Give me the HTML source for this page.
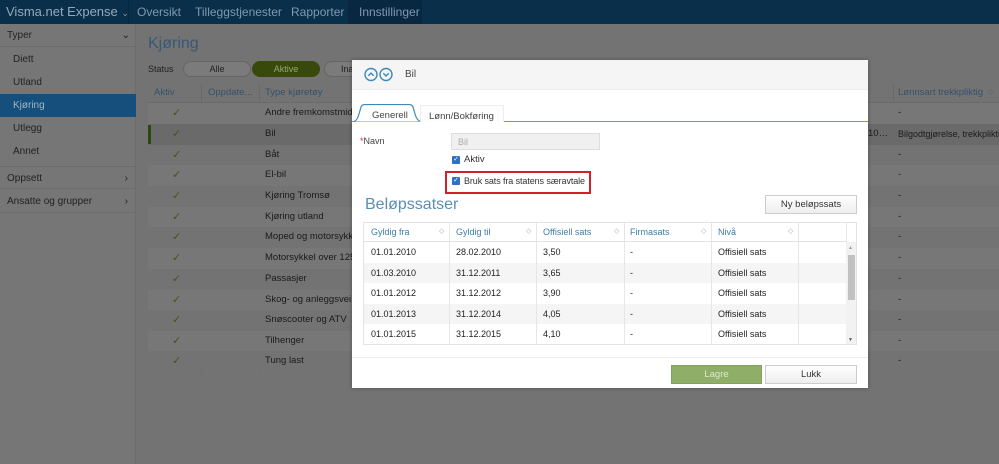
<!DOCTYPE html>
<html><head><meta charset="utf-8"><style>
*{box-sizing:border-box;margin:0;padding:0}
body{width:999px;height:464px;overflow:hidden;background:#737373;font-family:"Liberation Sans",sans-serif;position:relative;font-size:11px;color:#222;white-space:nowrap}
.a{position:absolute}
.nav{left:0;top:0;width:999px;height:24px;background:#0a2f4b}
.nav span{position:absolute;top:5px;color:#7f9ab0;font-size:12px}
.side{left:0;top:24px;width:136px;height:440px;background:#767676;border-right:1px solid #6c6c6c}
.si{position:absolute;left:0;width:136px;height:23px;font-size:10px;color:#222;line-height:23px}
.row{position:absolute;left:148px;width:851px;height:21px;font-size:9.5px;color:#1a1a1a;line-height:20px;overflow:hidden}
.chk{position:absolute;left:172px;color:#45521f;font-size:11px}
.mrow{position:absolute;left:0;width:482px;height:20.5px;line-height:20px;font-size:9px;color:#222}
.mrow span,.mh span{position:absolute}
.mh{position:absolute;left:0;top:0;width:482px;height:19px;line-height:18px;font-size:9px;color:#3d7fa6;background:#fff;border-bottom:1px solid #e3e3e3}
.vl{position:absolute;top:0;width:1px;height:123px;background:#e6e6e6}
.srt{color:#aaa;font-size:7px}
</style></head><body>
<div class="a nav">
<span style="left:6px;color:#93a9ba;font-size:13px;top:4px">Visma.net Expense <span style="position:static;font-size:9px">⌄</span></span>
<div class="a" style="left:128px;top:0;width:1px;height:24px;background:#082840"></div>
<span style="left:137px">Oversikt</span>
<span style="left:195px">Tilleggstjenester</span>
<span style="left:291px">Rapporter</span>
<div class="a" style="left:348px;top:0;width:74px;height:24px;background:#082842"></div>
<span style="left:359px">Innstillinger</span>
</div>
<div class="a side">
<div class="si" style="top:0;left:0;padding-left:7px;border-bottom:1px solid #6c6c6c">Typer<span style="position:absolute;right:6px">⌄</span></div>
<div class="si" style="top:24px;padding-left:13px">Diett</div>
<div class="si" style="top:47px;padding-left:13px">Utland</div>
<div class="si" style="top:70px;padding-left:13px;background:#164f7c;color:#a0b6c6">Kjøring</div>
<div class="si" style="top:93px;padding-left:13px">Utlegg</div>
<div class="si" style="top:116px;padding-left:13px">Annet</div>
<div class="si" style="top:142px;padding-left:7px;border-top:1px solid #6c6c6c;border-bottom:1px solid #6c6c6c">Oppsett<span style="position:absolute;right:8px">›</span></div>
<div class="si" style="top:166px;padding-left:7px;border-bottom:1px solid #6c6c6c">Ansatte og grupper<span style="position:absolute;right:8px">›</span></div>
</div>
<div class="a" style="left:148px;top:35px;font-size:16px;color:#375876">Kjøring</div>
<div class="a" style="left:148px;top:64px;font-size:9px;color:#222">Status</div>
<div class="a" style="left:183px;top:61px;width:68px;height:16px;border-radius:8px;background:#7b7b7b;border:1px solid #666;text-align:center;font-size:9px;line-height:14px;color:#222">Alle</div>
<div class="a" style="left:252px;top:61px;width:68px;height:16px;border-radius:8px;background:#384a0b;text-align:center;font-size:9px;line-height:16px;color:#97a575">Aktive</div>
<div class="a" style="left:324px;top:61px;width:40px;height:16px;border-radius:8px 0 0 8px;background:#7b7b7b;border:1px solid #666;font-size:9px;line-height:14px;padding-left:16px;color:#222">Ina</div>
<div class="a" style="left:148px;top:84px;width:851px;height:19px;background:#737373;border-bottom:1px solid #6a6a6a;font-size:9.5px;color:#34526b;line-height:18px">
<span class="a" style="left:6px">Aktiv</span><span class="a" style="left:60px">Oppdate...</span><span class="a" style="left:117px">Type kjøretøy</span><span class="a" style="left:750px">Lønnsart trekkpliktig</span><span class="a" style="left:840px;color:#5e5e5e;font-size:7px">◇</span>
</div>
<div class="a" style="left:201px;top:84px;width:1px;height:290px;background:#6a6a6a"></div>
<div class="a" style="left:259px;top:84px;width:1px;height:290px;background:#6a6a6a"></div>
<div class="a" style="left:893px;top:84px;width:1px;height:290px;background:#6a6a6a"></div>
<div class="row" style="top:103px;background:#777"><span class="a" style="left:117px">Andre fremkomstmidler</span><span class="a" style="left:750px">-</span></div>
<div class="row" style="top:124px;background:#6a6a6a"><div class="a" style="left:0;top:1px;width:3px;height:19px;background:#2c460c"></div><span class="a" style="left:117px">Bil</span><span class="a" style="left:720px">10…</span><span class="a" style="left:750px;font-size:9px">Bilgodtgjørelse, trekkpliktig</span></div>
<div class="row" style="top:145px;background:#737373"><span class="a" style="left:117px">Båt</span><span class="a" style="left:750px">-</span></div>
<div class="row" style="top:165px;background:#777"><span class="a" style="left:117px">El-bil</span><span class="a" style="left:750px">-</span></div>
<div class="row" style="top:186px;background:#737373"><span class="a" style="left:117px">Kjøring Tromsø</span><span class="a" style="left:750px">-</span></div>
<div class="row" style="top:207px;background:#777"><span class="a" style="left:117px">Kjøring utland</span><span class="a" style="left:750px">-</span></div>
<div class="row" style="top:227px;background:#737373"><span class="a" style="left:117px">Moped og motorsykkel o</span><span class="a" style="left:750px">-</span></div>
<div class="row" style="top:248px;background:#777"><span class="a" style="left:117px">Motorsykkel over 125 cc</span><span class="a" style="left:750px">-</span></div>
<div class="row" style="top:269px;background:#737373"><span class="a" style="left:117px">Passasjer</span><span class="a" style="left:750px">-</span></div>
<div class="row" style="top:290px;background:#777"><span class="a" style="left:117px">Skog- og anleggsvei</span><span class="a" style="left:750px">-</span></div>
<div class="row" style="top:310px;background:#737373"><span class="a" style="left:117px">Snøscooter og ATV</span><span class="a" style="left:750px">-</span></div>
<div class="row" style="top:331px;background:#777"><span class="a" style="left:117px">Tilhenger</span><span class="a" style="left:750px">-</span></div>
<div class="row" style="top:351px;background:#737373"><span class="a" style="left:117px">Tung last</span><span class="a" style="left:750px">-</span></div>
<div class="chk a" style="top:106px">✓</div><div class="chk a" style="top:127px">✓</div><div class="chk a" style="top:148px">✓</div><div class="chk a" style="top:168px">✓</div><div class="chk a" style="top:189px">✓</div><div class="chk a" style="top:210px">✓</div><div class="chk a" style="top:230px">✓</div><div class="chk a" style="top:251px">✓</div><div class="chk a" style="top:272px">✓</div><div class="chk a" style="top:293px">✓</div><div class="chk a" style="top:313px">✓</div><div class="chk a" style="top:334px">✓</div><div class="chk a" style="top:354px">✓</div>

<!-- modal -->
<div class="a" style="left:352px;top:60px;width:516px;height:328px;background:#fff;box-shadow:0 0 4px rgba(0,0,0,.3)">
<div class="a" style="left:0;top:0;width:516px;height:30px;background:#f5f5f5;border-bottom:1px solid #ececec"></div>
<svg class="a" style="left:12px;top:7px" width="32" height="15" viewBox="0 0 32 15"><circle cx="7" cy="7.5" r="6" fill="none" stroke="#3d8ab8" stroke-width="1.4"/><path d="M4.3 8.8 7 6.1 9.7 8.8" fill="none" stroke="#3d8ab8" stroke-width="1.4"/><circle cx="22" cy="7.5" r="6" fill="none" stroke="#3d8ab8" stroke-width="1.4"/><path d="M19.3 6.3 22 9 24.7 6.3" fill="none" stroke="#3d8ab8" stroke-width="1.4"/></svg>
<div class="a" style="left:53px;top:9px;font-size:10px;color:#444">Bil</div>
<div class="a" style="left:0;top:61px;width:516px;height:1px;background:#7ea23f"></div>
<svg class="a" style="left:2px;top:44px" width="68" height="18"><path d="M0 17.5 Q3 17 5 10 L7 3 Q8 0.5 11 0.5 L55 0.5 Q58 0.5 59 3 L61 10 Q63 17 67 17.5" fill="#fff" stroke="#3d8ab8" stroke-width="1.2"/></svg>
<div class="a" style="left:20px;top:50px;font-size:9.5px;color:#444">Generell</div>
<div class="a" style="left:68px;top:45px;width:84px;height:17px;background:#fdfdfd;border:1px solid #eee;border-bottom:none;font-size:9.5px;color:#444;padding:5px 0 0 8px">Lønn/Bokføring</div>
<div class="a" style="left:8px;top:76px;font-size:9px;color:#444"><span style="color:#c33">*</span>Navn</div>
<div class="a" style="left:99px;top:73px;width:149px;height:17px;background:#f0f0f0;border:1px solid #ddd;font-size:9px;color:#aaa;padding:3px 0 0 6px">Bil</div>
<div class="a" style="left:100px;top:96px;width:8px;height:8px;background:#2d73c2;border-radius:1px;color:#fff;font-size:7px;line-height:8px;text-align:center">✓</div>
<div class="a" style="left:112px;top:94px;font-size:9.5px;color:#333">Aktiv</div>
<div class="a" style="left:93px;top:111px;width:146px;height:23px;border:2.5px solid #d0202a"></div>
<div class="a" style="left:100px;top:117px;width:8px;height:8px;background:#2d73c2;border-radius:1px;color:#fff;font-size:7px;line-height:8px;text-align:center">✓</div>
<div class="a" style="left:112px;top:116px;font-size:9px;color:#333;letter-spacing:-0.1px">Bruk sats fra statens særavtale</div>
<div class="a" style="left:13px;top:136px;font-size:16px;color:#5b8fb2">Beløpssatser</div>
<div class="a" style="left:413px;top:135px;width:92px;height:19px;border:1px solid #ccc;background:linear-gradient(#fff,#eee);font-size:9.5px;color:#333;text-align:center;line-height:17px">Ny beløpssats</div>
<div class="a" style="left:11px;top:162px;width:494px;height:123px;border:1px solid #e3e3e3;background:#fff;overflow:hidden">
<div class="mh"><span style="left:7px">Gyldig fra</span><span class="srt" style="left:75px">◇</span><span style="left:92px">Gyldig til</span><span class="srt" style="left:162px">◇</span><span style="left:179px">Offisiell sats</span><span class="srt" style="left:250px">◇</span><span style="left:266px">Firmasats</span><span class="srt" style="left:337px">◇</span><span style="left:354px">Nivå</span><span class="srt" style="left:424px">◇</span></div>
<div class="mrow" style="top:19px"><span style="left:7px">01.01.2010</span><span style="left:92px">28.02.2010</span><span style="left:179px">3,50</span><span style="left:266px">-</span><span style="left:354px">Offisiell sats</span></div>
<div class="mrow" style="top:39.5px;background:#f5f5f5"><span style="left:7px">01.03.2010</span><span style="left:92px">31.12.2011</span><span style="left:179px">3,65</span><span style="left:266px">-</span><span style="left:354px">Offisiell sats</span></div>
<div class="mrow" style="top:60px"><span style="left:7px">01.01.2012</span><span style="left:92px">31.12.2012</span><span style="left:179px">3,90</span><span style="left:266px">-</span><span style="left:354px">Offisiell sats</span></div>
<div class="mrow" style="top:80.5px;background:#f5f5f5"><span style="left:7px">01.01.2013</span><span style="left:92px">31.12.2014</span><span style="left:179px">4,05</span><span style="left:266px">-</span><span style="left:354px">Offisiell sats</span></div>
<div class="mrow" style="top:101px"><span style="left:7px">01.01.2015</span><span style="left:92px">31.12.2015</span><span style="left:179px">4,10</span><span style="left:266px">-</span><span style="left:354px">Offisiell sats</span></div>
<div class="vl" style="left:85px"></div><div class="vl" style="left:172px"></div><div class="vl" style="left:260px"></div><div class="vl" style="left:347px"></div><div class="vl" style="left:434px"></div><div class="vl" style="left:482px"></div>
<div class="a" style="left:482px;top:19px;width:11px;height:104px;background:#f2f2f2"></div>
<div class="a" style="left:484px;top:32px;width:7px;height:45px;background:#c1c1c1"></div>
<div class="a" style="left:484px;top:22px;color:#999;font-size:5px">▲</div>
<div class="a" style="left:484px;top:114px;color:#555;font-size:5px">▼</div>
</div>
<div class="a" style="left:0;top:297px;width:516px;height:1px;background:#eee"></div>
<div class="a" style="left:319px;top:305px;width:91px;height:19px;background:#8fae68;border:1px solid #84a25d;color:#dfe9d2;font-size:9.5px;text-align:center;line-height:17px">Lagre</div>
<div class="a" style="left:413px;top:305px;width:92px;height:19px;border:1px solid #ccc;background:linear-gradient(#fff,#eee);font-size:9.5px;color:#333;text-align:center;line-height:17px">Lukk</div>
</div>
</body></html>
